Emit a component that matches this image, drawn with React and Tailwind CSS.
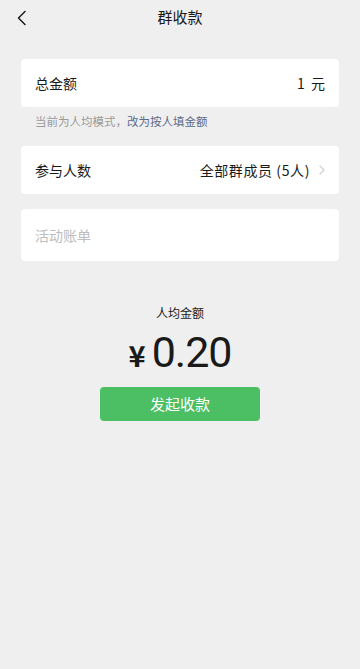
import React from "react";

const font = { fontFamily: '"Noto Sans CJK SC", "Noto Sans", sans-serif' };

function BackIcon() {
  return (
    <svg width="12" height="16" viewBox="0 0 12 16" fill="none">
      <path d="M9 1.5L2.5 8L9 14.5" stroke="#1a1a1a" strokeWidth="1.5" strokeLinecap="round" strokeLinejoin="round" />
    </svg>
  );
}

function Chevron() {
  return (
    <svg width="6" height="10" viewBox="0 0 6 10" fill="none">
      <path d="M1 1L5 5L1 9" stroke="#cfcfcf" strokeWidth="1.2" strokeLinecap="round" strokeLinejoin="round" />
    </svg>
  );
}

export default function App() {
  return (
    <div className="w-[360px] h-[669px] bg-[#efefef] text-[#1a1a1a]" style={font}>
      <div className="relative h-[35px] flex items-center justify-center">
        <div className="absolute left-[16px] top-[10px]">
          <BackIcon />
        </div>
        <span className="text-[15px]">群收款</span>
      </div>

      <div className="px-[21px] pt-[24px]">
        <div className="bg-white rounded-[4px] h-[48px] px-[14px] flex items-center justify-between">
          <span className="text-[14px]">总金额</span>
          <span className="text-[14px]">1&nbsp;&nbsp;元</span>
        </div>
        <p className="text-[11.5px] text-[#9a9a9a] px-[14px] mt-[6px] leading-[16px]">
          当前为人均模式，<span className="text-[#5c6b8a]">改为按人填金额</span>
        </p>

        <div className="bg-white rounded-[4px] h-[48px] px-[14px] mt-[17px] flex items-center justify-between">
          <span className="text-[14px]">参与人数</span>
          <span className="flex items-center gap-[9px] text-[14px]">
            <span className="tracking-[0.6px]">全部群成员 (5人)</span>
            <Chevron />
          </span>
        </div>

        <div className="bg-white rounded-[4px] h-[52px] px-[14px] mt-[15px] flex items-center">
          <span className="text-[14px] text-[#bdbdbd]">活动账单</span>
        </div>
      </div>

      <div className="flex flex-col items-center mt-[44px]">
        <span className="text-[12px] leading-[16px]">人均金额</span>
        <div className="flex items-baseline mt-[10px] leading-none">
          <span className="text-[29px] font-bold mr-[6px]">¥</span>
          <span className="text-[43px] tracking-[-1px]" style={{ fontFamily: '"Roboto", sans-serif' }}>0.20</span>
        </div>
        <button className="mt-[13px] w-[160px] h-[34px] rounded-[4px] bg-[#4cbe63] text-white text-[15px] flex items-center justify-center">
          发起收款
        </button>
      </div>
    </div>
  );
}
